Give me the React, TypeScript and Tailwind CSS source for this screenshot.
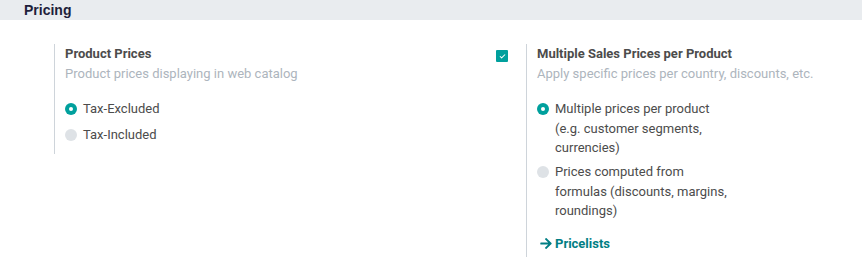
import { Check } from "lucide-react";

const Radio = ({ checked }: { checked?: boolean }) =>
  checked ? (
    <span className="mt-[4px] flex h-[12px] w-[12px] shrink-0 items-center justify-center rounded-full bg-[#00a09d]">
      <span className="h-[4px] w-[4px] rounded-full bg-white" />
    </span>
  ) : (
    <span className="mt-[4px] h-[12px] w-[12px] shrink-0 rounded-full bg-[#dee2e6]" />
  );

export default function App() {
  return (
    <div className="h-[261px] w-[862px] bg-white font-['Roboto',sans-serif] text-[13px] leading-[19.5px] text-[#4c4c4c]">
      <div className="flex h-[20px] items-center bg-[#e9ecef] pl-[24px]">
        <h2 className="font-['Liberation_Sans',Arial,sans-serif] text-[14px] font-bold leading-none text-[#1e1f3b]">Pricing</h2>
      </div>

      <div className="mt-[24px] flex items-start pl-[30px]">
        {/* left setting */}
        <div className="flex w-[466px]">
          <div className="w-[24px]" />
          <div className="border-l border-[#ced4da] pb-[10px] pl-[10px]">
            <div className="font-bold">Product Prices</div>
            <div className="text-[#adb5bd]">Product prices displaying in web catalog</div>
            <div className="mt-[16px] flex flex-col gap-[6px]">
              <label className="flex gap-[6px]">
                <Radio checked />
                <span>Tax-Excluded</span>
              </label>
              <label className="flex gap-[6px]">
                <Radio />
                <span>Tax-Included</span>
              </label>
            </div>
          </div>
        </div>

        {/* right setting */}
        <div className="flex">
          <div className="w-[30px] pt-[6px]">
            <span className="flex h-[12px] w-[12px] items-center justify-center rounded-[1px] bg-[#00a09d]">
              <Check className="h-[7px] w-[7px] text-white" strokeWidth={3.5} />
            </span>
          </div>
          <div className="border-l border-[#ced4da] pb-[4px] pl-[10px]">
            <div className="font-bold">Multiple Sales Prices per Product</div>
            <div className="text-[#adb5bd]">Apply specific prices per country, discounts, etc.</div>
            <div className="mt-[16px] flex flex-col gap-[4.5px]">
              <label className="flex gap-[6px]">
                <Radio checked />
                <span>
                  Multiple prices per product
                  <br />
                  (e.g. customer segments,
                  <br />
                  currencies)
                </span>
              </label>
              <label className="flex gap-[6px]">
                <Radio />
                <span>
                  Prices computed from
                  <br />
                  formulas (discounts, margins,
                  <br />
                  roundings)
                </span>
              </label>
            </div>
            <a className="mt-[13px] flex items-center gap-[3px] pl-[3px] font-bold text-[#017e84]">
              <svg viewBox="0 0 448 512" className="h-[13px] w-[12px]" fill="currentColor">
                <path d="M190.5 66.9l22.2-22.2c9.4-9.4 24.6-9.4 33.9 0L441 239c9.4 9.4 9.4 24.6 0 33.9L246.6 467.3c-9.4 9.4-24.6 9.4-33.9 0l-22.2-22.2c-9.5-9.5-9.3-25 .4-34.3L311.4 296H24c-13.3 0-24-10.7-24-24v-32c0-13.3 10.7-24 24-24h287.4L190.9 101.2c-9.8-9.3-10-24.8-.4-34.3z" />
              </svg>
              Pricelists
            </a>
          </div>
        </div>
      </div>
    </div>
  );
}
